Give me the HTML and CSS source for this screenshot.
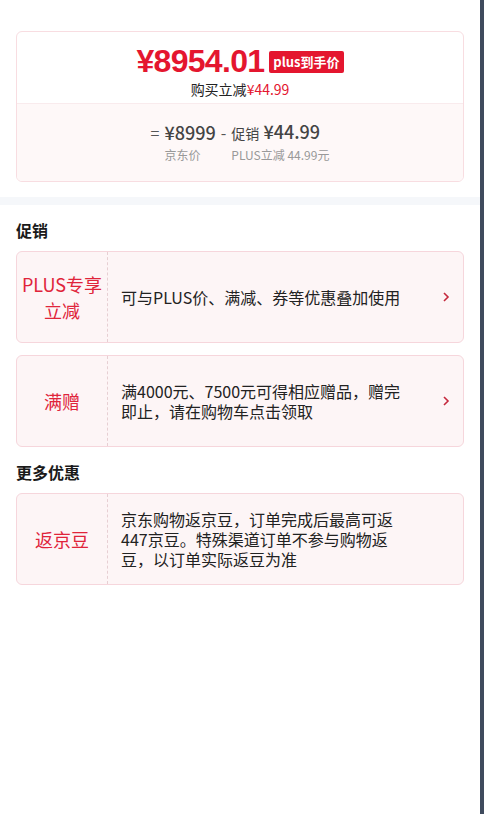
FILE: index.html
```html
<!DOCTYPE html>
<html lang="zh-CN">
<head>
    <meta charset="UTF-8">
    <meta name="viewport" content="width=device-width, initial-scale=1.0">
    <title>优惠详情</title>
    <link rel="stylesheet" href="styles.css">
</head>
<body>

<div class="page">
    <div class="price-card">
        <div class="price-top">
            <div class="price-main">
                <span class="price-final">¥8954.01</span>
                <span class="price-tag">plus到手价</span>
            </div>
            <div class="price-save">购买立减<span class="red">¥44.99</span></div>
        </div>
        <div class="price-calc">
            <div class="calc-grid">
                <span class="op">=</span>
                <span class="num">¥8999</span>
                <span class="op">-</span>
                <span class="num"><small>促销</small> ¥44.99</span>
                <span></span>
                <span class="calc-label">京东价</span>
                <span></span>
                <span class="calc-label">PLUS立减 44.99元</span>
            </div>
        </div>
    </div>

    <div class="band"></div>

    <div class="section">
        <h3>促销</h3>
        <div class="promo">
            <div class="promo-name">PLUS专享<br>立减</div>
            <div class="promo-desc">可与PLUS价、满减、券等优惠叠加使用</div>
            <div class="promo-arrow">
                <svg width="8" height="12" viewBox="0 0 8 12"><path d="M2 2 L6 6 L2 10" fill="none" stroke="#c5283d" stroke-width="1.6"/></svg>
            </div>
        </div>
        <div class="promo">
            <div class="promo-name">满赠</div>
            <div class="promo-desc">满4000元、7500元可得相应赠品，赠完即止，请在购物车点击领取</div>
            <div class="promo-arrow">
                <svg width="8" height="12" viewBox="0 0 8 12"><path d="M2 2 L6 6 L2 10" fill="none" stroke="#c5283d" stroke-width="1.6"/></svg>
            </div>
        </div>

        <h3 class="more">更多优惠</h3>
        <div class="promo">
            <div class="promo-name">返京豆</div>
            <div class="promo-desc">京东购物返京豆，订单完成后最高可返447京豆。特殊渠道订单不参与购物返豆，以订单实际返豆为准</div>
            <div class="promo-arrow"></div>
        </div>
    </div>
</div>

</body>
</html>
```

FILE: styles.css
```css
body {
    margin: 0;
    font-family: "Noto Sans CJK SC", "Liberation Sans", sans-serif;
    color: #222;
    background: #fff;
}
.page {
    width: 480px;
    min-height: 814px;
    border-right: 4px solid #3f4b5d;
    padding-top: 31px;
}
.price-card {
    margin: 0 16px;
    border: 1px solid #f8dde1;
    border-radius: 6px;
    overflow: hidden;
}
.price-top {
    height: 72px;
    text-align: center;
    border-bottom: 1px solid #f9ebed;
    padding-top: 14px;
    box-sizing: border-box;
}
.price-main {
    display: flex;
    justify-content: center;
    align-items: center;
    height: 30px;
}
.price-final {
    font-family: "Liberation Sans", "Noto Sans CJK SC", sans-serif;
    font-size: 32px;
    font-weight: bold;
    color: #e4162f;
    letter-spacing: -0.7px;
}
.price-tag {
    margin-left: 5px;
    margin-top: 2px;
    background: #e4162f;
    color: #fff;
    font-size: 13px;
    font-weight: bold;
    line-height: 22px;
    padding: 0 4px;
    border-radius: 2px;
}
.price-save {
    font-size: 14px;
    line-height: 20px;
    margin-top: 3px;
}
.red {
    color: #e4162f;
}
.price-calc {
    background: #fef8f8;
    height: 77px;
    display: flex;
    justify-content: center;
    padding-top: 16px;
    box-sizing: border-box;
}
.calc-grid {
    display: grid;
    grid-template-columns: auto auto auto auto;
    grid-template-rows: 24px 18px;
    column-gap: 5px;
    row-gap: 2px;
    align-items: center;
}
.op {
    font-size: 16px;
    line-height: 24px;
    color: #555;
}
.num {
    font-size: 18px;
    line-height: 24px;
    font-weight: 500;
    color: #444;
}
.num small {
    font-size: 14px;
    font-weight: normal;
}
.calc-label {
    font-size: 12px;
    line-height: 18px;
    color: #999;
}
.band {
    height: 8px;
    background: #f5f7fa;
    margin-top: 15px;
}
.section {
    padding: 14px 16px 0;
}
.section h3 {
    margin: 0 0 10px;
    font-size: 16px;
    line-height: 22px;
    font-weight: bold;
    color: #1a1a1a;
}
.section h3.more {
    margin-top: 14px;
}
.promo {
    display: flex;
    align-items: stretch;
    min-height: 90px;
    border: 1px solid #f6d6dc;
    border-radius: 6px;
    background: #fdf5f6;
    margin-bottom: 12px;
}
.promo-name {
    width: 90px;
    flex-shrink: 0;
    border-right: 1px dashed #e7cfd3;
    display: flex;
    align-items: center;
    justify-content: center;
    text-align: center;
    font-size: 18px;
    line-height: 26px;
    color: #e0243a;
}
.promo-desc {
    flex: 1;
    display: flex;
    align-items: center;
    padding-left: 13px;
    font-size: 16px;
    line-height: 20px;
    color: #222;
}
.promo-arrow {
    width: 54px;
    flex-shrink: 0;
    display: flex;
    align-items: center;
    justify-content: flex-end;
    padding-right: 13px;
    box-sizing: border-box;
}
```
